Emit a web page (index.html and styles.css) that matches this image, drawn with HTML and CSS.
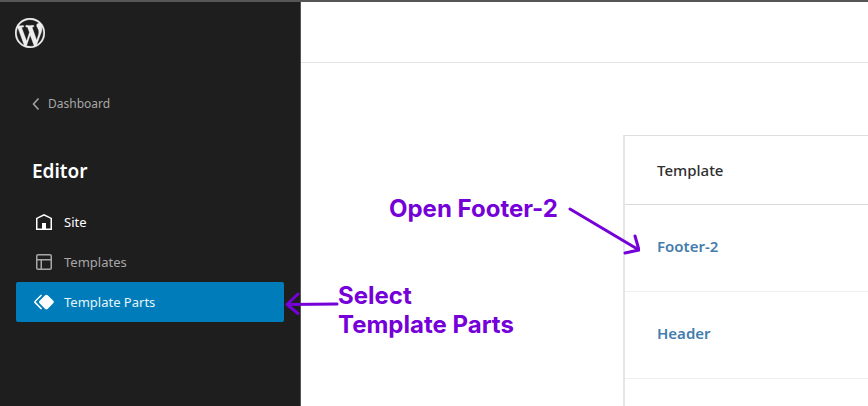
FILE: index.html
```
<!DOCTYPE html>
<html lang="en">
<head>
<meta charset="utf-8">
<meta name="viewport" content="width=device-width, initial-scale=1">
<title>Editor - Template Parts</title>
<link rel="stylesheet" href="styles.css">
</head>
<body>
<div class="app">
  <aside class="sidebar">
    <a class="logo" href="#" aria-label="WordPress">
      <svg viewBox="0 0 20 20" width="30" height="30" fill="currentColor" stroke="currentColor" stroke-width="0.2" aria-hidden="true"><path d="M20 10c0-5.51-4.49-10-10-10C4.48 0 0 4.49 0 10c0 5.52 4.48 10 10 10 5.51 0 10-4.48 10-10zM7.78 15.37L4.37 6.22c.55-.02 1.17-.08 1.17-.08.5-.06.44-1.13-.06-1.11 0 0-1.45.11-2.37.11-.18 0-.37 0-.58-.01C4.12 2.69 6.87 1.11 10 1.11c2.33 0 4.45.87 6.05 2.34-.68-.11-1.65.39-1.65 1.58 0 .74.45 1.36.9 2.1.35.61.55 1.36.55 2.46 0 1.49-1.4 5-1.4 5l-3.03-8.37c.54-.02.82-.17.82-.17.5-.05.44-1.25-.06-1.22 0 0-1.44.12-2.38.12-.87 0-2.33-.12-2.33-.12-.5-.03-.56 1.2-.06 1.22l.92.08 1.26 3.41zM17.41 10c.24-.64.74-1.87.43-4.25.7 1.29 1.05 2.71 1.05 4.25 0 3.29-1.73 6.24-4.4 7.78.97-2.59 1.94-5.2 2.92-7.78zM6.1 18.09C3.12 16.65 1.11 13.53 1.11 10c0-1.3.23-2.48.72-3.59C3.25 10.3 4.67 14.2 6.1 18.09zm4.03-6.63l2.58 6.98c-.86.29-1.76.45-2.71.45-.79 0-1.57-.11-2.29-.33.81-2.38 1.62-4.74 2.42-7.1z"/></svg>
    </a>
    <a class="back" href="#">
      <svg viewBox="0 0 8 12" width="8" height="12" fill="none" stroke="currentColor" stroke-width="1.5" aria-hidden="true"><path d="M6.5 0.5L1.5 6l5 5.5"/></svg>
      Dashboard
    </a>
    <h1 class="title">Editor</h1>
    <nav class="menu">
      <a class="item item-site" href="#">
        <svg viewBox="0 0 24 24" width="24" height="24" fill="currentColor" aria-hidden="true"><path d="M12 4L4 7.9V20h16V7.9L12 4zm6.5 14.5H14V13h-4v5.5H5.5V8.8L12 5.7l6.500 3.1v9.7z"/></svg>
        Site
      </a>
      <a class="item" href="#">
        <svg viewBox="0 0 24 24" width="24" height="24" fill="currentColor" aria-hidden="true"><path d="M18 5.500H6a.5.5 0 0 0-.5.5v3h13V6a.5.5 0 0 0-.5-.5zm.5 5H10v8h8a.5.5 0 0 0 .5-.5v-7.500zm-10 0h-3V18a.5.5 0 0 0 .5.5h2.500v-8zM6 4h12a2 2 0 0 1 2 2v12a2 2 0 0 1-2 2H6a2 2 0 0 1-2-2V6a2 2 0 0 1 2-2z"/></svg>
        Templates
      </a>
      <a class="item item-current" href="#" aria-current="page">
        <svg class="bright" viewBox="0 0 24 24" width="24" height="24" fill="currentColor" aria-hidden="true"><path d="M21.300 10.800l-5.600-5.600c-.7-.7-1.800-.7-2.500 0l-5.600 5.600c-.7.7-.7 1.800 0 2.500l5.600 5.600c.3.3.8.5 1.200.5s.9-.2 1.200-.5l5.600-5.600c.8-.7.8-1.900.1-2.500zm-17.600 1L10 5.500l-1-1-6.300 6.300c-.7.7-.7 1.800 0 2.500L9 19.500l1.100-1.100-6.300-6.300c-.2 0-.2-.2-.1-.3z"/></svg>
        Template Parts
      </a>
    </nav>
  </aside>
  <main class="content">
    <header class="topbar"></header>
    <div class="panel">
      <table class="list">
        <thead><tr><th scope="col">Template</th></tr></thead>
        <tbody>
          <tr><td><a href="#">Footer-2</a></td></tr>
          <tr><td><a href="#">Header</a></td></tr>
        </tbody>
      </table>
    </div>
  </main>
  <svg class="arrows" viewBox="0 0 360 120" width="360" height="120" fill="none" stroke="currentColor" stroke-width="3" stroke-linecap="round" stroke-linejoin="round" aria-hidden="true">
    <path d="M290 9L359 50M355 36l4 14-14 3"/>
    <path d="M57 104L7 104.500M18 94L7 104.500l11 9"/>
  </svg>
  <p class="note note-open">Open Footer-2</p>
  <p class="note note-select">Select<br>Template Parts</p>
</div>
</body>
</html>
```
FILE: styles.css
```
* { box-sizing: border-box; }

body {
  margin: 0;
  background: #fff;
  font-family: "Noto Sans", "Open Sans", sans-serif;
  font-size: 13px;
  line-height: 20px;
}

a { color: inherit; text-decoration: none; }
svg { display: block; flex: none; }

.app {
  position: relative;
  display: flex;
  min-height: 100vh;
  overflow: hidden;
  border-top: 2px solid #565656;
}

.sidebar {
  flex: 0 0 301px;
  padding: 16px 16px 0;
  background: #1e1e1e;
  border-right: 1px solid #555;
  color: #a7a7a7;
}

.logo {
  display: block;
  width: 30px;
  margin-left: -1px;
  color: #eee;
}

.back {
  display: flex;
  align-items: center;
  gap: 8px;
  margin: 46px 16px 0;
  font-size: 12px;
}

.title {
  margin: 44px 16px 0;
  color: #fff;
  font-size: 19px;
  font-weight: 600;
  line-height: 26px;
}

.menu { margin-top: 18px; }

.item {
  display: flex;
  align-items: center;
  gap: 8px;
  height: 40px;
  padding: 0 16px;
  border-radius: 2px;
}

.item-site { color: #fff; }

.item-current {
  background: #007cba;
  color: #e6f4fb;
}

.bright { color: #fff; }

.content { flex: 1; min-width: 0; }

.topbar {
  height: 61px;
  border-bottom: 1px solid #e4e4e4;
}

.panel {
  min-height: 272px;
  margin: 72px 0 0 322px;
  border-top: 1px solid #ddd;
  border-left: 2px solid #e6e6e6;
}

.list {
  width: 100%;
  border-spacing: 0;
  font-size: 15px;
}

.list th,
.list td {
  height: 87px;
  padding: 0 32px 4px;
  border-bottom: 1px solid #eee;
  color: #437cae;
  font-weight: 600;
  text-align: left;
}

.list th {
  height: 69px;
  padding-bottom: 0;
  border-color: #d9d9d9;
  color: #2f2f2f;
  font-weight: 500;
}

.arrows {
  position: absolute;
  top: 198px;
  left: 280px;
  color: #7500d8;
}

.note {
  position: absolute;
  margin: 0;
  color: #7500d8;
  font-family: Inter, sans-serif;
  font-size: 24px;
  font-weight: 700;
  line-height: 29px;
}

.note-open { top: 192px; left: 389px; }
.note-select { top: 279px; left: 338px; }
```
